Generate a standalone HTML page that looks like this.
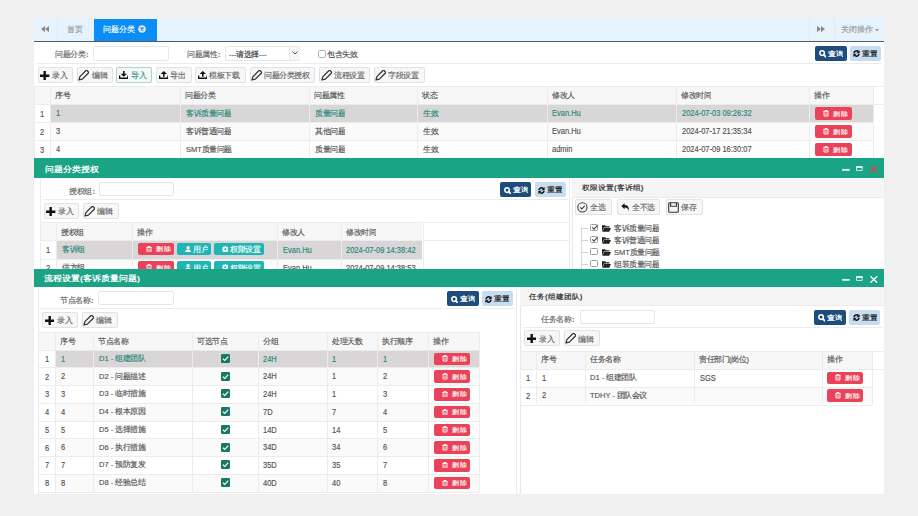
<!DOCTYPE html><html><head><meta charset="utf-8"><style>
*{box-sizing:border-box}
html,body{margin:0;padding:0}
body{width:918px;height:516px;background:#f0f0f0;position:relative;overflow:hidden;font-family:"Liberation Sans",sans-serif;font-size:7.6px;color:#555;line-height:1}
.a{position:absolute}
.t{position:absolute;white-space:nowrap;line-height:1;-webkit-text-stroke:0.3px currentColor}
.t.b{-webkit-text-stroke:0}
.btn{position:absolute;background:#f7f7f7;border:1px solid #e2e2e2;border-radius:2px;color:#666;white-space:nowrap}
.inp{position:absolute;background:#fff;border:1px solid #e6e6e6;border-radius:2px}
.hl{position:absolute;height:1px;background:#ececec}
.vl{position:absolute;width:1px;background:#ececec}
.del{position:absolute;background:#ea4359;border-radius:2px;color:#fff;white-space:nowrap}
.q{position:absolute;background:#1e4c7b;border-radius:2px;color:#fff}
.r{position:absolute;background:#c6ddf1;border-radius:2px;color:#1e3550}
.dh{position:absolute;background:#1ba386;color:#fff}
</style></head><body>
<div class="a" style="left:34px;top:18px;width:850px;height:476px;background:#fff"></div>
<div class="a" style="left:34px;top:18px;width:850px;height:23px;background:#e6f3fd"></div>
<div class="a" style="left:34px;top:41px;width:850px;height:1.3px;background:#4f5c68"></div>
<div class="a" style="left:93.8px;top:18.6px;width:63px;height:22px;background:#0a8df7"></div>
<div class="a" style="left:57px;top:18px;width:1px;height:23px;background:#dfeaf3"></div>
<div class="a" style="left:809px;top:18px;width:1px;height:23px;background:#dfeaf3"></div>
<div class="a" style="left:834px;top:18px;width:1px;height:23px;background:#dfeaf3"></div>
<div class="t" style="left:67px;top:25.099999999999998px;font-size:16px;transform:scale(.5,0.500);transform-origin:0 0;;color:#999">首页</div>
<div class="t" style="left:103px;top:25.099999999999998px;font-size:16px;transform:scale(.5,0.500);transform-origin:0 0;;color:#fff">问题分类</div>
<svg class="a" style="left:138px;top:25.2px" width="8" height="8" viewBox="0 0 8 8"><circle cx="4" cy="4" r="3.8" fill="#e0e6ea"/><path d="M2.5 2.5L5.5 5.5M5.5 2.5L2.5 5.5" stroke="#0a8df7" stroke-width="1.3"/></svg>
<svg class="a" style="left:40.8px;top:25.6px" width="8" height="6.2" viewBox="0 0 8 6.2"><path d="M0 3.1L4 0V6.2Z M4 3.1L8 0V6.2Z" fill="#8a8a8a"/></svg>
<svg class="a" style="left:817px;top:25.6px" width="8" height="6.2" viewBox="0 0 8 6.2"><path d="M8 3.1L4 0V6.2Z M4 3.1L0 0V6.2Z" fill="#8a8a8a"/></svg>
<div class="t" style="left:841px;top:25.099999999999998px;font-size:16px;transform:scale(.5,0.500);transform-origin:0 0;;color:#999">关闭操作</div>
<svg class="a" style="left:874.8px;top:29px" width="4" height="2.5" viewBox="0 0 4 2.5"><path d="M0 0H4L2 2.5Z" fill="#999"/></svg>
<div class="t" style="left:54.6px;top:50.2px;font-size:15px;transform:scale(.5,0.500);transform-origin:0 0;;color:#666">问题分类<span style="font-family:'Liberation Mono'">:</span></div>
<div class="inp" style="left:93.2px;top:45.5px;width:75.6px;height:15px;"></div>
<div class="t" style="left:187.2px;top:50.2px;font-size:15px;transform:scale(.5,0.500);transform-origin:0 0;;color:#666">问题属性<span style="font-family:'Liberation Mono'">:</span></div>
<div class="inp" style="left:225.3px;top:45.5px;width:75.2px;height:15px;"></div>
<div class="a" style="left:288.6px;top:46.5px;width:11px;height:13px;background:#f6f6f6;border-left:1px solid #e6e6e6"></div>
<div class="t" style="left:229px;top:50.2px;font-size:15px;transform:scale(.5,0.500);transform-origin:0 0;;color:#333">---请选择---</div>
<svg class="a" style="left:292px;top:50.5px" width="6" height="4" viewBox="0 0 6 4"><path d="M0.5 0.5L3 3L5.5 0.5" stroke="#555" stroke-width="1" fill="none"/></svg>
<div class="a" style="left:318.2px;top:49.7px;width:8.1px;height:8.1px;border:1px solid #b0b0b0;border-radius:1.5px;background:#fff"></div>
<div class="t" style="left:327.4px;top:49.6px;font-size:15px;transform:scale(.5,0.500);transform-origin:0 0;;color:#555">包含失效</div>
<div class="q" style="left:815px;top:45.5px;width:31.5px;height:15.5px;"></div>
<svg class="a" style="left:818.6px;top:50.35px" width="7.4" height="7.4" viewBox="0 0 7.4 7.4"><circle cx="3.1" cy="3.1" r="2.3" stroke="#fff" stroke-width="1.5" fill="none"/><path d="M4.7 4.7L6.8 6.8" stroke="#fff" stroke-width="1.8" stroke-linecap="round"/></svg>
<div class="t b" style="left:827.8px;top:50.050000000000004px;font-size:15px;transform:scale(.5,0.440);transform-origin:0 0;;color:#fff;font-weight:bold">查询</div>
<div class="r" style="left:849.9px;top:45.5px;width:31px;height:15.5px;"></div>
<svg class="a" style="left:853.3px;top:50.35px" width="7" height="7" viewBox="0 0 7 7"><path d="M1 3.2A2.6 2.6 0 0 1 5.5 1.7" stroke="#151515" stroke-width="1.5" fill="none"/><path d="M6.6 0V3.2H3.4Z" fill="#151515"/><path d="M6 3.8A2.6 2.6 0 0 1 1.5 5.3" stroke="#151515" stroke-width="1.5" fill="none"/><path d="M0.4 7V3.8H3.6Z" fill="#151515"/></svg>
<div class="t b" style="left:862.1px;top:50.050000000000004px;font-size:15px;transform:scale(.5,0.440);transform-origin:0 0;;color:#2a2a2a;font-weight:bold">重置</div>
<div class="hl" style="left:37px;top:63px;width:845px;height:1px;"></div>
<div class="btn" style="left:37.8px;top:67px;width:35.7px;height:15.7px;border-color:#e2e2e2"></div>
<svg class="a" style="left:40.4px;top:70.6px" width="9.4" height="9.4" viewBox="0 0 9.4 9.4"><path d="M4.7 0V9.4M0 4.7H9.4" stroke="#111" stroke-width="2.4"/></svg>
<div class="t" style="left:52.3px;top:71.14999999999999px;font-size:15px;transform:scale(.5,0.500);transform-origin:0 0;;color:#666">录入</div>
<div class="btn" style="left:77.2px;top:67px;width:36.1px;height:15.7px;border-color:#e2e2e2"></div>
<svg class="a" style="left:78.4px;top:69.6px" width="11" height="11" viewBox="0 0 11 11"><g transform="translate(1.0,10.0) rotate(-45)"><path d="M0 0L3 -1.75H11.3A1.1 1.1 0 0 1 12.4 -0.65V0.65A1.1 1.1 0 0 1 11.3 1.75H3Z" stroke="#333" stroke-width="1.25" fill="none" stroke-linejoin="round"/><path d="M0 0L1.6 -0.95V0.95Z" fill="#333"/></g></svg>
<div class="t" style="left:91.7px;top:71.14999999999999px;font-size:15px;transform:scale(.5,0.500);transform-origin:0 0;;color:#666">编辑</div>
<div class="btn" style="left:116px;top:67px;width:36.3px;height:15.7px;border-color:#a9d6cd"></div>
<svg class="a" style="left:118.8px;top:71.4px" width="9.6" height="8" viewBox="0 0 9.6 8"><path d="M4.0 0H5.6V2.8H8.0L4.8 5.8L1.6 2.8H4.0Z" fill="#111"/><path d="M0 4.4H1.3V6.5H8.3V4.4H9.6V8H0Z" fill="#111"/></svg>
<div class="t" style="left:130.5px;top:71.14999999999999px;font-size:15px;transform:scale(.5,0.500);transform-origin:0 0;;color:#2f9a8a">导入</div>
<div class="btn" style="left:155.7px;top:67px;width:35.9px;height:15.7px;border-color:#e2e2e2"></div>
<svg class="a" style="left:158.5px;top:71.4px" width="9.6" height="8" viewBox="0 0 9.6 8"><path d="M4.0 5.8H5.6V3.0H8.0L4.8 0L1.6 3.0H4.0Z" fill="#111"/><path d="M0 4.4H1.3V6.5H8.3V4.4H9.6V8H0Z" fill="#111"/></svg>
<div class="t" style="left:170.2px;top:71.14999999999999px;font-size:15px;transform:scale(.5,0.500);transform-origin:0 0;;color:#666">导出</div>
<div class="btn" style="left:194.8px;top:67px;width:51.2px;height:15.7px;border-color:#e2e2e2"></div>
<svg class="a" style="left:197.60000000000002px;top:71.4px" width="9.6" height="8" viewBox="0 0 9.6 8"><path d="M4.0 5.8H5.6V3.0H8.0L4.8 0L1.6 3.0H4.0Z" fill="#111"/><path d="M0 4.4H1.3V6.5H8.3V4.4H9.6V8H0Z" fill="#111"/></svg>
<div class="t" style="left:209.3px;top:71.14999999999999px;font-size:15px;transform:scale(.5,0.500);transform-origin:0 0;;color:#666">模板下载</div>
<div class="btn" style="left:249.7px;top:67px;width:65.8px;height:15.7px;border-color:#e2e2e2"></div>
<svg class="a" style="left:250.89999999999998px;top:69.6px" width="11" height="11" viewBox="0 0 11 11"><g transform="translate(1.0,10.0) rotate(-45)"><path d="M0 0L3 -1.75H11.3A1.1 1.1 0 0 1 12.4 -0.65V0.65A1.1 1.1 0 0 1 11.3 1.75H3Z" stroke="#333" stroke-width="1.25" fill="none" stroke-linejoin="round"/><path d="M0 0L1.6 -0.95V0.95Z" fill="#333"/></g></svg>
<div class="t" style="left:264.2px;top:71.14999999999999px;font-size:15px;transform:scale(.5,0.500);transform-origin:0 0;;color:#666">问题分类授权</div>
<div class="btn" style="left:319.4px;top:67px;width:50.8px;height:15.7px;border-color:#e2e2e2"></div>
<svg class="a" style="left:320.59999999999997px;top:69.6px" width="11" height="11" viewBox="0 0 11 11"><g transform="translate(1.0,10.0) rotate(-45)"><path d="M0 0L3 -1.75H11.3A1.1 1.1 0 0 1 12.4 -0.65V0.65A1.1 1.1 0 0 1 11.3 1.75H3Z" stroke="#333" stroke-width="1.25" fill="none" stroke-linejoin="round"/><path d="M0 0L1.6 -0.95V0.95Z" fill="#333"/></g></svg>
<div class="t" style="left:333.9px;top:71.14999999999999px;font-size:15px;transform:scale(.5,0.500);transform-origin:0 0;;color:#666">流程设置</div>
<div class="btn" style="left:373.5px;top:67px;width:51.2px;height:15.7px;border-color:#e2e2e2"></div>
<svg class="a" style="left:374.7px;top:69.6px" width="11" height="11" viewBox="0 0 11 11"><g transform="translate(1.0,10.0) rotate(-45)"><path d="M0 0L3 -1.75H11.3A1.1 1.1 0 0 1 12.4 -0.65V0.65A1.1 1.1 0 0 1 11.3 1.75H3Z" stroke="#333" stroke-width="1.25" fill="none" stroke-linejoin="round"/><path d="M0 0L1.6 -0.95V0.95Z" fill="#333"/></g></svg>
<div class="t" style="left:388.0px;top:71.14999999999999px;font-size:15px;transform:scale(.5,0.500);transform-origin:0 0;;color:#666">字段设置</div>
<div class="a" style="left:34px;top:86.3px;width:838.7px;height:17.8px;background:#f7f7f7"></div>
<div class="a" style="left:50.4px;top:104.1px;width:822.3000000000001px;height:18.0px;background:#d8d6d7"></div>
<div class="a" style="left:34px;top:104.1px;width:16.4px;height:18.0px;background:#fff"></div>
<div class="a" style="left:50.4px;top:122.1px;width:822.3000000000001px;height:18.0px;background:#fafafa"></div>
<div class="a" style="left:34px;top:122.1px;width:16.4px;height:18.0px;background:#fff"></div>
<div class="a" style="left:50.4px;top:140.1px;width:822.3000000000001px;height:18.0px;background:#fff"></div>
<div class="a" style="left:34px;top:140.1px;width:16.4px;height:18.0px;background:#fff"></div>
<div class="hl" style="left:34px;top:86.3px;width:838.7px;height:1px;"></div>
<div class="hl" style="left:34px;top:104.1px;width:838.7px;height:1px;"></div>
<div class="hl" style="left:34px;top:122.1px;width:838.7px;height:1px;"></div>
<div class="hl" style="left:34px;top:140.1px;width:838.7px;height:1px;"></div>
<div class="hl" style="left:34px;top:158.1px;width:838.7px;height:1px;"></div>
<div class="vl" style="left:34px;top:86.3px;width:1px;height:71.8px;"></div>
<div class="vl" style="left:50.4px;top:86.3px;width:1px;height:71.8px;"></div>
<div class="vl" style="left:180.3px;top:86.3px;width:1px;height:71.8px;"></div>
<div class="vl" style="left:309.4px;top:86.3px;width:1px;height:71.8px;"></div>
<div class="vl" style="left:417.3px;top:86.3px;width:1px;height:71.8px;"></div>
<div class="vl" style="left:546.6px;top:86.3px;width:1px;height:71.8px;"></div>
<div class="vl" style="left:676.4px;top:86.3px;width:1px;height:71.8px;"></div>
<div class="vl" style="left:809.3px;top:86.3px;width:1px;height:71.8px;"></div>
<div class="vl" style="left:872.7px;top:86.3px;width:1px;height:71.8px;"></div>
<div class="t" style="left:55.4px;top:91.4px;font-size:15px;transform:scale(.5,0.500);transform-origin:0 0;;color:#555">序号</div>
<div class="t" style="left:185.3px;top:91.4px;font-size:15px;transform:scale(.5,0.500);transform-origin:0 0;;color:#555">问题分类</div>
<div class="t" style="left:314.4px;top:91.4px;font-size:15px;transform:scale(.5,0.500);transform-origin:0 0;;color:#555">问题属性</div>
<div class="t" style="left:422.3px;top:91.4px;font-size:15px;transform:scale(.5,0.500);transform-origin:0 0;;color:#555">状态</div>
<div class="t" style="left:551.6px;top:91.4px;font-size:15px;transform:scale(.5,0.500);transform-origin:0 0;;color:#555">修改人</div>
<div class="t" style="left:681.4px;top:91.4px;font-size:15px;transform:scale(.5,0.500);transform-origin:0 0;;color:#555">修改时间</div>
<div class="t" style="left:814.3px;top:91.4px;font-size:15px;transform:scale(.5,0.500);transform-origin:0 0;;color:#555">操作</div>
<div class="t" style="left:40.2px;top:109.6px;font-size:15px;transform:scale(.5,0.550);transform-origin:0 0;;color:#555">1</div>
<div class="t" style="left:56.0px;top:109.4px;font-size:15px;transform:scale(.5,0.550);transform-origin:0 0;;color:#28897a">1</div>
<div class="t" style="left:185.9px;top:108.6px;font-size:15px;transform:scale(.5,0.500);transform-origin:0 0;;color:#28897a">客诉质量问题</div>
<div class="t" style="left:315.0px;top:108.6px;font-size:15px;transform:scale(.5,0.500);transform-origin:0 0;;color:#28897a">质量问题</div>
<div class="t" style="left:422.90000000000003px;top:108.6px;font-size:15px;transform:scale(.5,0.500);transform-origin:0 0;;color:#28897a">生效</div>
<div class="t" style="left:552.2px;top:109.4px;font-size:15px;transform:scale(.5,0.550);transform-origin:0 0;;color:#28897a">Evan.Hu</div>
<div class="t" style="left:682.0px;top:109.4px;font-size:15px;transform:scale(.5,0.550);transform-origin:0 0;;color:#28897a">2024-07-03 09:26:32</div>
<div class="t" style="left:40.2px;top:127.6px;font-size:15px;transform:scale(.5,0.550);transform-origin:0 0;;color:#555">2</div>
<div class="t" style="left:56.0px;top:127.4px;font-size:15px;transform:scale(.5,0.550);transform-origin:0 0;;color:#555">3</div>
<div class="t" style="left:185.9px;top:126.6px;font-size:15px;transform:scale(.5,0.500);transform-origin:0 0;;color:#555">客诉普通问题</div>
<div class="t" style="left:315.0px;top:126.6px;font-size:15px;transform:scale(.5,0.500);transform-origin:0 0;;color:#555">其他问题</div>
<div class="t" style="left:422.90000000000003px;top:126.6px;font-size:15px;transform:scale(.5,0.500);transform-origin:0 0;;color:#555">生效</div>
<div class="t" style="left:552.2px;top:127.4px;font-size:15px;transform:scale(.5,0.550);transform-origin:0 0;;color:#555">Evan.Hu</div>
<div class="t" style="left:682.0px;top:127.4px;font-size:15px;transform:scale(.5,0.550);transform-origin:0 0;;color:#555">2024-07-17 21:35:34</div>
<div class="t" style="left:40.2px;top:145.59999999999997px;font-size:15px;transform:scale(.5,0.550);transform-origin:0 0;;color:#555">3</div>
<div class="t" style="left:56.0px;top:145.39999999999998px;font-size:15px;transform:scale(.5,0.550);transform-origin:0 0;;color:#555">4</div>
<div class="t" style="left:185.9px;top:144.59999999999997px;font-size:15px;transform:scale(.5,0.500);transform-origin:0 0;;color:#555">SMT质量问题</div>
<div class="t" style="left:315.0px;top:144.59999999999997px;font-size:15px;transform:scale(.5,0.500);transform-origin:0 0;;color:#555">质量问题</div>
<div class="t" style="left:422.90000000000003px;top:144.59999999999997px;font-size:15px;transform:scale(.5,0.500);transform-origin:0 0;;color:#555">生效</div>
<div class="t" style="left:552.2px;top:145.39999999999998px;font-size:15px;transform:scale(.5,0.550);transform-origin:0 0;;color:#555">admin</div>
<div class="t" style="left:682.0px;top:145.39999999999998px;font-size:15px;transform:scale(.5,0.550);transform-origin:0 0;;color:#555">2024-07-09 16:30:07</div>
<div class="hl" style="left:872.7px;top:86.3px;width:11px;height:1px;"></div>
<div class="hl" style="left:872.7px;top:104px;width:11px;height:1px;"></div>
<div class="del" style="left:814.9px;top:107.1px;width:37px;height:12.8px;"></div>
<svg class="a" style="left:822.9px;top:110.2px" width="6" height="6.5" viewBox="0 0 6 6.5"><path d="M0.3 1.4H5.7M2 1.4V0.5H4V1.4M1 1.6V6H5V1.6" stroke="#fff" stroke-width="0.9" fill="none"/><path d="M2.3 2.6V5M3.7 2.6V5" stroke="#fff" stroke-width="0.6"/></svg>
<div class="t" style="left:832.8px;top:109.60000000000001px;font-size:15px;transform:scale(.5,0.425);transform-origin:0 0;;color:#fff">删除</div>
<div class="del" style="left:814.9px;top:125.1px;width:37px;height:12.8px;"></div>
<svg class="a" style="left:822.9px;top:128.2px" width="6" height="6.5" viewBox="0 0 6 6.5"><path d="M0.3 1.4H5.7M2 1.4V0.5H4V1.4M1 1.6V6H5V1.6" stroke="#fff" stroke-width="0.9" fill="none"/><path d="M2.3 2.6V5M3.7 2.6V5" stroke="#fff" stroke-width="0.6"/></svg>
<div class="t" style="left:832.8px;top:127.60000000000001px;font-size:15px;transform:scale(.5,0.425);transform-origin:0 0;;color:#fff">删除</div>
<div class="del" style="left:814.9px;top:143.1px;width:37px;height:12.8px;"></div>
<svg class="a" style="left:822.9px;top:146.2px" width="6" height="6.5" viewBox="0 0 6 6.5"><path d="M0.3 1.4H5.7M2 1.4V0.5H4V1.4M1 1.6V6H5V1.6" stroke="#fff" stroke-width="0.9" fill="none"/><path d="M2.3 2.6V5M3.7 2.6V5" stroke="#fff" stroke-width="0.6"/></svg>
<div class="t" style="left:832.8px;top:145.6px;font-size:15px;transform:scale(.5,0.425);transform-origin:0 0;;color:#fff">删除</div>
<div class="dh" style="left:34px;top:157.5px;width:850px;height:20.4px;"></div>
<div class="t b" style="left:45.4px;top:164.79999999999998px;font-size:18px;transform:scale(.5,0.450);transform-origin:0 0;;font-weight:bold;color:#fff">问题分类授权</div>
<svg class="a" style="left:840px;top:164px" width="40" height="10" viewBox="0 0 40 10"><rect x="2.1" y="4.9" width="7.6" height="1.9" fill="rgba(255,255,255,.85)"/><path d="M16.5 3H22.2V6.4H16.5Z" stroke="rgba(255,255,255,.85)" stroke-width="0.9" fill="none"/><rect x="16" y="2.2" width="6.7" height="1.7" fill="rgba(255,255,255,.85)"/><path d="M30.4 2.3L37.2 8.8M37.2 2.3L30.4 8.8" stroke="#d4463f" stroke-width="1.2"/></svg>
<div class="a" style="left:34px;top:177.9px;width:850px;height:316px;background:#fff"></div>
<div class="a" style="left:39.5px;top:177.9px;width:0.8px;height:92px;background:#ececec"></div>
<div class="a" style="left:569.2px;top:177.9px;width:1px;height:92px;background:#ececec"></div>
<div class="a" style="left:571.8px;top:177.9px;width:1px;height:92px;background:#e6e6e6"></div>
<div class="t" style="left:68.8px;top:187.2px;font-size:15px;transform:scale(.5,0.500);transform-origin:0 0;;color:#666">授权组<span style="font-family:'Liberation Mono'">:</span></div>
<div class="inp" style="left:99.3px;top:182.2px;width:75.1px;height:14.2px;"></div>
<div class="q" style="left:499.9px;top:182px;width:31.6px;height:15.2px;"></div>
<svg class="a" style="left:503.5px;top:186.7px" width="7.4" height="7.4" viewBox="0 0 7.4 7.4"><circle cx="3.1" cy="3.1" r="2.3" stroke="#fff" stroke-width="1.5" fill="none"/><path d="M4.7 4.7L6.8 6.8" stroke="#fff" stroke-width="1.8" stroke-linecap="round"/></svg>
<div class="t b" style="left:512.6999999999999px;top:186.39999999999998px;font-size:15px;transform:scale(.5,0.440);transform-origin:0 0;;color:#fff;font-weight:bold">查询</div>
<div class="r" style="left:534.5px;top:182px;width:31.2px;height:15.2px;"></div>
<svg class="a" style="left:537.9px;top:186.7px" width="7" height="7" viewBox="0 0 7 7"><path d="M1 3.2A2.6 2.6 0 0 1 5.5 1.7" stroke="#151515" stroke-width="1.5" fill="none"/><path d="M6.6 0V3.2H3.4Z" fill="#151515"/><path d="M6 3.8A2.6 2.6 0 0 1 1.5 5.3" stroke="#151515" stroke-width="1.5" fill="none"/><path d="M0.4 7V3.8H3.6Z" fill="#151515"/></svg>
<div class="t b" style="left:546.7px;top:186.39999999999998px;font-size:15px;transform:scale(.5,0.440);transform-origin:0 0;;color:#2a2a2a;font-weight:bold">重置</div>
<div class="hl" style="left:42.6px;top:199.1px;width:525px;height:1px;"></div>
<div class="btn" style="left:43.7px;top:203px;width:35.8px;height:15.6px;border-color:#e2e2e2"></div>
<svg class="a" style="left:46.300000000000004px;top:206.6px" width="9.4" height="9.4" viewBox="0 0 9.4 9.4"><path d="M4.7 0V9.4M0 4.7H9.4" stroke="#111" stroke-width="2.4"/></svg>
<div class="t" style="left:58.2px;top:207.1px;font-size:15px;transform:scale(.5,0.500);transform-origin:0 0;;color:#666">录入</div>
<div class="btn" style="left:82.5px;top:203px;width:36.4px;height:15.6px;border-color:#e2e2e2"></div>
<svg class="a" style="left:83.7px;top:205.6px" width="11" height="11" viewBox="0 0 11 11"><g transform="translate(1.0,10.0) rotate(-45)"><path d="M0 0L3 -1.75H11.3A1.1 1.1 0 0 1 12.4 -0.65V0.65A1.1 1.1 0 0 1 11.3 1.75H3Z" stroke="#333" stroke-width="1.25" fill="none" stroke-linejoin="round"/><path d="M0 0L1.6 -0.95V0.95Z" fill="#333"/></g></svg>
<div class="t" style="left:97.0px;top:207.1px;font-size:15px;transform:scale(.5,0.500);transform-origin:0 0;;color:#666">编辑</div>
<div class="a" style="left:40.3px;top:222.1px;width:382.2px;height:18.2px;background:#f7f7f7"></div>
<div class="a" style="left:56.1px;top:240.29999999999998px;width:366.4px;height:18.5px;background:#d8d6d7"></div>
<div class="a" style="left:40.3px;top:240.29999999999998px;width:15.800000000000004px;height:18.5px;background:#fff"></div>
<div class="a" style="left:56.1px;top:258.79999999999995px;width:366.4px;height:18.5px;background:#fafafa"></div>
<div class="a" style="left:40.3px;top:258.79999999999995px;width:15.800000000000004px;height:18.5px;background:#fff"></div>
<div class="hl" style="left:40.3px;top:222.1px;width:382.2px;height:1px;"></div>
<div class="hl" style="left:40.3px;top:240.29999999999998px;width:382.2px;height:1px;"></div>
<div class="hl" style="left:40.3px;top:258.79999999999995px;width:382.2px;height:1px;"></div>
<div class="hl" style="left:40.3px;top:277.29999999999995px;width:382.2px;height:1px;"></div>
<div class="vl" style="left:40.3px;top:222.1px;width:1px;height:55.2px;"></div>
<div class="vl" style="left:56.1px;top:222.1px;width:1px;height:55.2px;"></div>
<div class="vl" style="left:132.4px;top:222.1px;width:1px;height:55.2px;"></div>
<div class="vl" style="left:277.3px;top:222.1px;width:1px;height:55.2px;"></div>
<div class="vl" style="left:340.8px;top:222.1px;width:1px;height:55.2px;"></div>
<div class="vl" style="left:422.5px;top:222.1px;width:1px;height:55.2px;"></div>
<div class="t" style="left:61.1px;top:227.79999999999998px;font-size:15px;transform:scale(.5,0.500);transform-origin:0 0;;color:#555">授权组</div>
<div class="t" style="left:137.4px;top:227.79999999999998px;font-size:15px;transform:scale(.5,0.500);transform-origin:0 0;;color:#555">操作</div>
<div class="t" style="left:282.3px;top:227.79999999999998px;font-size:15px;transform:scale(.5,0.500);transform-origin:0 0;;color:#555">修改人</div>
<div class="t" style="left:345.8px;top:227.79999999999998px;font-size:15px;transform:scale(.5,0.500);transform-origin:0 0;;color:#555">修改时间</div>
<div class="t" style="left:46.2px;top:245.84999999999997px;font-size:15px;transform:scale(.5,0.550);transform-origin:0 0;;color:#555">1</div>
<div class="t" style="left:61.7px;top:244.84999999999997px;font-size:15px;transform:scale(.5,0.500);transform-origin:0 0;;color:#28897a">客诉组</div>
<div class="t" style="left:282.90000000000003px;top:245.64999999999998px;font-size:15px;transform:scale(.5,0.550);transform-origin:0 0;;color:#28897a">Evan.Hu</div>
<div class="t" style="left:346.40000000000003px;top:245.64999999999998px;font-size:15px;transform:scale(.5,0.550);transform-origin:0 0;;color:#28897a">2024-07-09 14:38:42</div>
<div class="t" style="left:46.2px;top:264.34999999999997px;font-size:15px;transform:scale(.5,0.550);transform-origin:0 0;;color:#555">2</div>
<div class="t" style="left:61.7px;top:263.34999999999997px;font-size:15px;transform:scale(.5,0.500);transform-origin:0 0;;color:#555">供方组</div>
<div class="t" style="left:282.90000000000003px;top:264.1499999999999px;font-size:15px;transform:scale(.5,0.550);transform-origin:0 0;;color:#555">Evan.Hu</div>
<div class="t" style="left:346.40000000000003px;top:264.1499999999999px;font-size:15px;transform:scale(.5,0.550);transform-origin:0 0;;color:#555">2024-07-09 14:38:53</div>
<div class="hl" style="left:422.5px;top:222.1px;width:147px;height:1px;"></div>
<div class="hl" style="left:422.5px;top:240.3px;width:147px;height:1px;"></div>
<div class="del" style="left:137.9px;top:242.9px;width:36.6px;height:12.4px;"></div>
<svg class="a" style="left:145.9px;top:245.79999999999998px" width="6" height="6.5" viewBox="0 0 6 6.5"><path d="M0.3 1.4H5.7M2 1.4V0.5H4V1.4M1 1.6V6H5V1.6" stroke="#fff" stroke-width="0.9" fill="none"/><path d="M2.3 2.6V5M3.7 2.6V5" stroke="#fff" stroke-width="0.6"/></svg>
<div class="t" style="left:155.8px;top:245.2px;font-size:15px;transform:scale(.5,0.425);transform-origin:0 0;;color:#fff">删除</div>
<div class="a" style="left:177.1px;top:242.9px;width:33.9px;height:12.5px;background:#1fb5b4;border-radius:2px"></div>
<svg class="a" style="left:184.6px;top:245.9px" width="6.2" height="6.5" viewBox="0 0 6 6.5"><circle cx="3" cy="1.7" r="1.7" fill="#fff"/><path d="M0 6.5Q0 3.6 3 3.6Q6 3.6 6 6.5Z" fill="#fff"/></svg>
<div class="t" style="left:192.6px;top:245.1px;font-size:15px;transform:scale(.5,0.500);transform-origin:0 0;;color:#fff">用户</div>
<div class="a" style="left:214.1px;top:242.9px;width:49.7px;height:12.5px;background:#1fb5b4;border-radius:2px"></div>
<svg class="a" style="left:221.9px;top:245.8px" width="6.6" height="6.6" viewBox="0 0 6.5 6.5"><circle cx="3.25" cy="3.25" r="2.5" fill="#fff"/><rect x="2.55" y="-0.1" width="1.4" height="6.7" fill="#fff" transform="rotate(0 3.25 3.25)"/><rect x="2.55" y="-0.1" width="1.4" height="6.7" fill="#fff" transform="rotate(45 3.25 3.25)"/><rect x="2.55" y="-0.1" width="1.4" height="6.7" fill="#fff" transform="rotate(90 3.25 3.25)"/><rect x="2.55" y="-0.1" width="1.4" height="6.7" fill="#fff" transform="rotate(135 3.25 3.25)"/><circle cx="3.25" cy="3.25" r="1.05" fill="#1fb5b4"/></svg>
<div class="t" style="left:230.1px;top:245.1px;font-size:15px;transform:scale(.5,0.500);transform-origin:0 0;;color:#fff">权限设置</div>
<div class="del" style="left:137.9px;top:261.4px;width:36.6px;height:12.4px;"></div>
<svg class="a" style="left:145.9px;top:264.29999999999995px" width="6" height="6.5" viewBox="0 0 6 6.5"><path d="M0.3 1.4H5.7M2 1.4V0.5H4V1.4M1 1.6V6H5V1.6" stroke="#fff" stroke-width="0.9" fill="none"/><path d="M2.3 2.6V5M3.7 2.6V5" stroke="#fff" stroke-width="0.6"/></svg>
<div class="t" style="left:155.8px;top:263.69999999999993px;font-size:15px;transform:scale(.5,0.425);transform-origin:0 0;;color:#fff">删除</div>
<div class="a" style="left:177.1px;top:261.4px;width:33.9px;height:12.5px;background:#1fb5b4;border-radius:2px"></div>
<svg class="a" style="left:184.6px;top:264.4px" width="6.2" height="6.5" viewBox="0 0 6 6.5"><circle cx="3" cy="1.7" r="1.7" fill="#fff"/><path d="M0 6.5Q0 3.6 3 3.6Q6 3.6 6 6.5Z" fill="#fff"/></svg>
<div class="t" style="left:192.6px;top:263.59999999999997px;font-size:15px;transform:scale(.5,0.500);transform-origin:0 0;;color:#fff">用户</div>
<div class="a" style="left:214.1px;top:261.4px;width:49.7px;height:12.5px;background:#1fb5b4;border-radius:2px"></div>
<svg class="a" style="left:221.9px;top:264.29999999999995px" width="6.6" height="6.6" viewBox="0 0 6.5 6.5"><circle cx="3.25" cy="3.25" r="2.5" fill="#fff"/><rect x="2.55" y="-0.1" width="1.4" height="6.7" fill="#fff" transform="rotate(0 3.25 3.25)"/><rect x="2.55" y="-0.1" width="1.4" height="6.7" fill="#fff" transform="rotate(45 3.25 3.25)"/><rect x="2.55" y="-0.1" width="1.4" height="6.7" fill="#fff" transform="rotate(90 3.25 3.25)"/><rect x="2.55" y="-0.1" width="1.4" height="6.7" fill="#fff" transform="rotate(135 3.25 3.25)"/><circle cx="3.25" cy="3.25" r="1.05" fill="#1fb5b4"/></svg>
<div class="t" style="left:230.1px;top:263.59999999999997px;font-size:15px;transform:scale(.5,0.500);transform-origin:0 0;;color:#fff">权限设置</div>
<div class="a" style="left:572.2px;top:178.5px;width:312px;height:19px;background:#f5f5f5"></div>
<div class="hl" style="left:572.2px;top:197.3px;width:312px;height:1px;"></div>
<div class="t b" style="left:581.8px;top:184.1px;font-size:16px;transform:scale(.5,0.450);transform-origin:0 0;;font-weight:bold;color:#444">权限设置(客诉组)</div>
<div class="btn" style="left:575.4px;top:199.4px;width:36.6px;height:15.4px;"></div>
<div class="t" style="left:590.4px;top:203.39999999999998px;font-size:15px;transform:scale(.5,0.500);transform-origin:0 0;;color:#666">全选</div>
<svg class="a" style="left:577.1px;top:202px" width="11" height="11" viewBox="0 0 11 11"><circle cx="5.4" cy="5.4" r="4.6" stroke="#3a3f4c" stroke-width="1.1" fill="none"/><path d="M3.1 5.3L4.8 7L7.8 3.9" stroke="#3a3f4c" stroke-width="1.1" fill="none"/></svg>
<div class="btn" style="left:617.3px;top:199.4px;width:43.2px;height:15.4px;"></div>
<div class="t" style="left:632px;top:203.39999999999998px;font-size:15px;transform:scale(.5,0.500);transform-origin:0 0;;color:#666">全不选</div>
<svg class="a" style="left:620.8px;top:203px" width="8.5" height="8.5" viewBox="0 0 9 9"><path d="M0.3 3.3L3.8 0.3V2.1Q8.8 2.1 8.4 8.6Q7.4 4.8 3.8 4.8V6.5Z" fill="#1a1a1a"/></svg>
<div class="btn" style="left:666.1px;top:199.4px;width:36.6px;height:15.4px;"></div>
<div class="t" style="left:680.8px;top:203.39999999999998px;font-size:15px;transform:scale(.5,0.500);transform-origin:0 0;;color:#666">保存</div>
<svg class="a" style="left:667.8px;top:201.8px" width="11" height="11" viewBox="0 0 11 11"><rect x="0.7" y="0.7" width="9.6" height="9.6" rx="1" stroke="#333" stroke-width="1.1" fill="none"/><path d="M2.6 0.7V4.2H8.4V0.7" stroke="#333" stroke-width="1.1" fill="none"/></svg>
<div class="a" style="left:581.4px;top:226.5px;width:0.9px;height:42px;background:#d6d6d6"></div>
<div class="a" style="left:581.4px;top:227.7px;width:7px;height:0.9px;background:#d6d6d6"></div>
<div class="a" style="left:590.3px;top:223.89999999999998px;width:7.5px;height:7.5px;border:0.9px solid #9c9c9c;border-radius:1.5px;background:#fff"></div>
<svg class="a" style="left:591px;top:224.2px" width="7" height="7" viewBox="0 0 7 7"><path d="M1.3 3.4L3 5.2L6.6 1.2" stroke="#444" stroke-width="1.1" fill="none"/></svg>
<svg class="a" style="left:602px;top:224.5px" width="9" height="7" viewBox="0 0 9 7"><path d="M0 0.3H3.2L4 1.2H7.5V2.6H2L0 6.5Z" fill="#222"/><path d="M2.2 3H9L7.2 6.8H0.2Z" fill="#222"/></svg>
<div class="t" style="left:613.6px;top:224.29999999999998px;font-size:15px;transform:scale(.5,0.500);transform-origin:0 0;;color:#555">客诉质量问题</div>
<div class="a" style="left:581.4px;top:239.7px;width:7px;height:0.9px;background:#d6d6d6"></div>
<div class="a" style="left:590.3px;top:235.89999999999998px;width:7.5px;height:7.5px;border:0.9px solid #9c9c9c;border-radius:1.5px;background:#fff"></div>
<svg class="a" style="left:591px;top:236.2px" width="7" height="7" viewBox="0 0 7 7"><path d="M1.3 3.4L3 5.2L6.6 1.2" stroke="#444" stroke-width="1.1" fill="none"/></svg>
<svg class="a" style="left:602px;top:236.5px" width="9" height="7" viewBox="0 0 9 7"><path d="M0 0.3H3.2L4 1.2H7.5V2.6H2L0 6.5Z" fill="#222"/><path d="M2.2 3H9L7.2 6.8H0.2Z" fill="#222"/></svg>
<div class="t" style="left:613.6px;top:236.29999999999998px;font-size:15px;transform:scale(.5,0.500);transform-origin:0 0;;color:#555">客诉普通问题</div>
<div class="a" style="left:581.4px;top:251.7px;width:7px;height:0.9px;background:#d6d6d6"></div>
<div class="a" style="left:590.3px;top:247.89999999999998px;width:7.5px;height:7.5px;border:0.9px solid #9c9c9c;border-radius:1.5px;background:#fff"></div>
<svg class="a" style="left:602px;top:248.5px" width="9" height="7" viewBox="0 0 9 7"><path d="M0 0.3H3.2L4 1.2H7.5V2.6H2L0 6.5Z" fill="#222"/><path d="M2.2 3H9L7.2 6.8H0.2Z" fill="#222"/></svg>
<div class="t" style="left:613.6px;top:248.29999999999998px;font-size:15px;transform:scale(.5,0.500);transform-origin:0 0;;color:#555">SMT质量问题</div>
<div class="a" style="left:581.4px;top:263.7px;width:7px;height:0.9px;background:#d6d6d6"></div>
<div class="a" style="left:590.3px;top:259.9px;width:7.5px;height:7.5px;border:0.9px solid #9c9c9c;border-radius:1.5px;background:#fff"></div>
<svg class="a" style="left:602px;top:260.5px" width="9" height="7" viewBox="0 0 9 7"><path d="M0 0.3H3.2L4 1.2H7.5V2.6H2L0 6.5Z" fill="#222"/><path d="M2.2 3H9L7.2 6.8H0.2Z" fill="#222"/></svg>
<div class="t" style="left:613.6px;top:260.29999999999995px;font-size:15px;transform:scale(.5,0.500);transform-origin:0 0;;color:#555">组装质量问题</div>
<div class="dh" style="left:34px;top:269px;width:850px;height:18px;"></div>
<div class="t b" style="left:43.5px;top:273.8px;font-size:18px;transform:scale(.5,0.450);transform-origin:0 0;;font-weight:bold;color:#fff">流程设置(客诉质量问题)</div>
<svg class="a" style="left:840px;top:273.5px" width="40" height="10" viewBox="0 0 40 10"><rect x="2.1" y="4.9" width="7.6" height="1.9" fill="rgba(255,255,255,.85)"/><path d="M16.5 3H22.2V6.4H16.5Z" stroke="rgba(255,255,255,.85)" stroke-width="0.9" fill="none"/><rect x="16" y="2.2" width="6.7" height="1.7" fill="rgba(255,255,255,.85)"/><path d="M30.4 2.3L37.2 8.8M37.2 2.3L30.4 8.8" stroke="#fff" stroke-width="1.2"/></svg>
<div class="a" style="left:34px;top:287px;width:850px;height:207px;background:#fff"></div>
<div class="a" style="left:516.2px;top:287px;width:1px;height:207px;background:#ececec"></div>
<div class="a" style="left:519.6px;top:287px;width:1px;height:207px;background:#e6e6e6"></div>
<div class="a" style="left:38.3px;top:287px;width:0.8px;height:207px;background:#ececec"></div>
<div class="t" style="left:59.8px;top:296.2px;font-size:15px;transform:scale(.5,0.500);transform-origin:0 0;;color:#666">节点名称<span style="font-family:'Liberation Mono'">:</span></div>
<div class="inp" style="left:98.2px;top:291px;width:75.6px;height:14.3px;"></div>
<div class="q" style="left:447.2px;top:291px;width:31.6px;height:15.3px;"></div>
<svg class="a" style="left:450.8px;top:295.75px" width="7.4" height="7.4" viewBox="0 0 7.4 7.4"><circle cx="3.1" cy="3.1" r="2.3" stroke="#fff" stroke-width="1.5" fill="none"/><path d="M4.7 4.7L6.8 6.8" stroke="#fff" stroke-width="1.8" stroke-linecap="round"/></svg>
<div class="t b" style="left:460.0px;top:295.45px;font-size:15px;transform:scale(.5,0.440);transform-origin:0 0;;color:#fff;font-weight:bold">查询</div>
<div class="r" style="left:482px;top:291px;width:31.2px;height:15.2px;"></div>
<svg class="a" style="left:485.4px;top:295.70000000000005px" width="7" height="7" viewBox="0 0 7 7"><path d="M1 3.2A2.6 2.6 0 0 1 5.5 1.7" stroke="#151515" stroke-width="1.5" fill="none"/><path d="M6.6 0V3.2H3.4Z" fill="#151515"/><path d="M6 3.8A2.6 2.6 0 0 1 1.5 5.3" stroke="#151515" stroke-width="1.5" fill="none"/><path d="M0.4 7V3.8H3.6Z" fill="#151515"/></svg>
<div class="t b" style="left:494.2px;top:295.40000000000003px;font-size:15px;transform:scale(.5,0.440);transform-origin:0 0;;color:#2a2a2a;font-weight:bold">重置</div>
<div class="hl" style="left:41px;top:308.4px;width:474px;height:1px;"></div>
<div class="btn" style="left:42.4px;top:312.3px;width:36px;height:15.4px;border-color:#e2e2e2"></div>
<svg class="a" style="left:45.0px;top:315.90000000000003px" width="9.4" height="9.4" viewBox="0 0 9.4 9.4"><path d="M4.7 0V9.4M0 4.7H9.4" stroke="#111" stroke-width="2.4"/></svg>
<div class="t" style="left:56.9px;top:316.3px;font-size:15px;transform:scale(.5,0.500);transform-origin:0 0;;color:#666">录入</div>
<div class="btn" style="left:81.6px;top:312.3px;width:36.6px;height:15.4px;border-color:#e2e2e2"></div>
<svg class="a" style="left:82.8px;top:314.90000000000003px" width="11" height="11" viewBox="0 0 11 11"><g transform="translate(1.0,10.0) rotate(-45)"><path d="M0 0L3 -1.75H11.3A1.1 1.1 0 0 1 12.4 -0.65V0.65A1.1 1.1 0 0 1 11.3 1.75H3Z" stroke="#333" stroke-width="1.25" fill="none" stroke-linejoin="round"/><path d="M0 0L1.6 -0.95V0.95Z" fill="#333"/></g></svg>
<div class="t" style="left:96.1px;top:316.3px;font-size:15px;transform:scale(.5,0.500);transform-origin:0 0;;color:#666">编辑</div>
<div class="a" style="left:38.3px;top:332.2px;width:441.0px;height:17.4px;background:#f7f7f7"></div>
<div class="a" style="left:55px;top:349.59999999999997px;width:424.3px;height:17.75px;background:#d8d6d7"></div>
<div class="a" style="left:38.3px;top:349.59999999999997px;width:16.700000000000003px;height:17.75px;background:#fff"></div>
<div class="a" style="left:55px;top:367.34999999999997px;width:424.3px;height:17.75px;background:#fafafa"></div>
<div class="a" style="left:38.3px;top:367.34999999999997px;width:16.700000000000003px;height:17.75px;background:#fff"></div>
<div class="a" style="left:55px;top:385.09999999999997px;width:424.3px;height:17.75px;background:#fff"></div>
<div class="a" style="left:38.3px;top:385.09999999999997px;width:16.700000000000003px;height:17.75px;background:#fff"></div>
<div class="a" style="left:55px;top:402.84999999999997px;width:424.3px;height:17.75px;background:#fafafa"></div>
<div class="a" style="left:38.3px;top:402.84999999999997px;width:16.700000000000003px;height:17.75px;background:#fff"></div>
<div class="a" style="left:55px;top:420.59999999999997px;width:424.3px;height:17.75px;background:#fff"></div>
<div class="a" style="left:38.3px;top:420.59999999999997px;width:16.700000000000003px;height:17.75px;background:#fff"></div>
<div class="a" style="left:55px;top:438.34999999999997px;width:424.3px;height:17.75px;background:#fafafa"></div>
<div class="a" style="left:38.3px;top:438.34999999999997px;width:16.700000000000003px;height:17.75px;background:#fff"></div>
<div class="a" style="left:55px;top:456.09999999999997px;width:424.3px;height:17.75px;background:#fff"></div>
<div class="a" style="left:38.3px;top:456.09999999999997px;width:16.700000000000003px;height:17.75px;background:#fff"></div>
<div class="a" style="left:55px;top:473.84999999999997px;width:424.3px;height:17.75px;background:#fafafa"></div>
<div class="a" style="left:38.3px;top:473.84999999999997px;width:16.700000000000003px;height:17.75px;background:#fff"></div>
<div class="hl" style="left:38.3px;top:332.2px;width:441.0px;height:1px;"></div>
<div class="hl" style="left:38.3px;top:349.59999999999997px;width:441.0px;height:1px;"></div>
<div class="hl" style="left:38.3px;top:367.34999999999997px;width:441.0px;height:1px;"></div>
<div class="hl" style="left:38.3px;top:385.09999999999997px;width:441.0px;height:1px;"></div>
<div class="hl" style="left:38.3px;top:402.84999999999997px;width:441.0px;height:1px;"></div>
<div class="hl" style="left:38.3px;top:420.59999999999997px;width:441.0px;height:1px;"></div>
<div class="hl" style="left:38.3px;top:438.34999999999997px;width:441.0px;height:1px;"></div>
<div class="hl" style="left:38.3px;top:456.09999999999997px;width:441.0px;height:1px;"></div>
<div class="hl" style="left:38.3px;top:473.84999999999997px;width:441.0px;height:1px;"></div>
<div class="hl" style="left:38.3px;top:491.59999999999997px;width:441.0px;height:1px;"></div>
<div class="vl" style="left:38.3px;top:332.2px;width:1px;height:159.4px;"></div>
<div class="vl" style="left:55px;top:332.2px;width:1px;height:159.4px;"></div>
<div class="vl" style="left:93px;top:332.2px;width:1px;height:159.4px;"></div>
<div class="vl" style="left:192.2px;top:332.2px;width:1px;height:159.4px;"></div>
<div class="vl" style="left:257.6px;top:332.2px;width:1px;height:159.4px;"></div>
<div class="vl" style="left:326.8px;top:332.2px;width:1px;height:159.4px;"></div>
<div class="vl" style="left:377px;top:332.2px;width:1px;height:159.4px;"></div>
<div class="vl" style="left:428.3px;top:332.2px;width:1px;height:159.4px;"></div>
<div class="vl" style="left:479.3px;top:332.2px;width:1px;height:159.4px;"></div>
<div class="t" style="left:60px;top:337.29999999999995px;font-size:15px;transform:scale(.5,0.500);transform-origin:0 0;;color:#555">序号</div>
<div class="t" style="left:98px;top:337.29999999999995px;font-size:15px;transform:scale(.5,0.500);transform-origin:0 0;;color:#555">节点名称</div>
<div class="t" style="left:197.2px;top:337.29999999999995px;font-size:15px;transform:scale(.5,0.500);transform-origin:0 0;;color:#555">可选节点</div>
<div class="t" style="left:262.6px;top:337.29999999999995px;font-size:15px;transform:scale(.5,0.500);transform-origin:0 0;;color:#555">分组</div>
<div class="t" style="left:331.8px;top:337.29999999999995px;font-size:15px;transform:scale(.5,0.500);transform-origin:0 0;;color:#555">处理天数</div>
<div class="t" style="left:382px;top:337.29999999999995px;font-size:15px;transform:scale(.5,0.500);transform-origin:0 0;;color:#555">执行顺序</div>
<div class="t" style="left:433.3px;top:337.29999999999995px;font-size:15px;transform:scale(.5,0.500);transform-origin:0 0;;color:#555">操作</div>
<div class="t" style="left:44.65px;top:354.775px;font-size:15px;transform:scale(.5,0.550);transform-origin:0 0;;color:#555">1</div>
<div class="t" style="left:60.6px;top:354.57499999999993px;font-size:15px;transform:scale(.5,0.550);transform-origin:0 0;;color:#28897a">1</div>
<div class="t" style="left:98.6px;top:353.775px;font-size:15px;transform:scale(.5,0.500);transform-origin:0 0;;color:#28897a">D1 - 组建团队</div>
<div class="t" style="left:263.20000000000005px;top:354.57499999999993px;font-size:15px;transform:scale(.5,0.550);transform-origin:0 0;;color:#28897a">24H</div>
<div class="t" style="left:332.40000000000003px;top:354.57499999999993px;font-size:15px;transform:scale(.5,0.550);transform-origin:0 0;;color:#28897a">1</div>
<div class="t" style="left:382.6px;top:354.57499999999993px;font-size:15px;transform:scale(.5,0.550);transform-origin:0 0;;color:#28897a">1</div>
<div class="t" style="left:44.65px;top:372.525px;font-size:15px;transform:scale(.5,0.550);transform-origin:0 0;;color:#555">2</div>
<div class="t" style="left:60.6px;top:372.32499999999993px;font-size:15px;transform:scale(.5,0.550);transform-origin:0 0;;color:#555">2</div>
<div class="t" style="left:98.6px;top:371.525px;font-size:15px;transform:scale(.5,0.500);transform-origin:0 0;;color:#555">D2 - 问题描述</div>
<div class="t" style="left:263.20000000000005px;top:372.32499999999993px;font-size:15px;transform:scale(.5,0.550);transform-origin:0 0;;color:#555">24H</div>
<div class="t" style="left:332.40000000000003px;top:372.32499999999993px;font-size:15px;transform:scale(.5,0.550);transform-origin:0 0;;color:#555">1</div>
<div class="t" style="left:382.6px;top:372.32499999999993px;font-size:15px;transform:scale(.5,0.550);transform-origin:0 0;;color:#555">2</div>
<div class="t" style="left:44.65px;top:390.275px;font-size:15px;transform:scale(.5,0.550);transform-origin:0 0;;color:#555">3</div>
<div class="t" style="left:60.6px;top:390.07499999999993px;font-size:15px;transform:scale(.5,0.550);transform-origin:0 0;;color:#555">3</div>
<div class="t" style="left:98.6px;top:389.275px;font-size:15px;transform:scale(.5,0.500);transform-origin:0 0;;color:#555">D3 - 临时措施</div>
<div class="t" style="left:263.20000000000005px;top:390.07499999999993px;font-size:15px;transform:scale(.5,0.550);transform-origin:0 0;;color:#555">24H</div>
<div class="t" style="left:332.40000000000003px;top:390.07499999999993px;font-size:15px;transform:scale(.5,0.550);transform-origin:0 0;;color:#555">1</div>
<div class="t" style="left:382.6px;top:390.07499999999993px;font-size:15px;transform:scale(.5,0.550);transform-origin:0 0;;color:#555">3</div>
<div class="t" style="left:44.65px;top:408.025px;font-size:15px;transform:scale(.5,0.550);transform-origin:0 0;;color:#555">4</div>
<div class="t" style="left:60.6px;top:407.82499999999993px;font-size:15px;transform:scale(.5,0.550);transform-origin:0 0;;color:#555">4</div>
<div class="t" style="left:98.6px;top:407.025px;font-size:15px;transform:scale(.5,0.500);transform-origin:0 0;;color:#555">D4 - 根本原因</div>
<div class="t" style="left:263.20000000000005px;top:407.82499999999993px;font-size:15px;transform:scale(.5,0.550);transform-origin:0 0;;color:#555">7D</div>
<div class="t" style="left:332.40000000000003px;top:407.82499999999993px;font-size:15px;transform:scale(.5,0.550);transform-origin:0 0;;color:#555">7</div>
<div class="t" style="left:382.6px;top:407.82499999999993px;font-size:15px;transform:scale(.5,0.550);transform-origin:0 0;;color:#555">4</div>
<div class="t" style="left:44.65px;top:425.775px;font-size:15px;transform:scale(.5,0.550);transform-origin:0 0;;color:#555">5</div>
<div class="t" style="left:60.6px;top:425.57499999999993px;font-size:15px;transform:scale(.5,0.550);transform-origin:0 0;;color:#555">5</div>
<div class="t" style="left:98.6px;top:424.775px;font-size:15px;transform:scale(.5,0.500);transform-origin:0 0;;color:#555">D5 - 选择措施</div>
<div class="t" style="left:263.20000000000005px;top:425.57499999999993px;font-size:15px;transform:scale(.5,0.550);transform-origin:0 0;;color:#555">14D</div>
<div class="t" style="left:332.40000000000003px;top:425.57499999999993px;font-size:15px;transform:scale(.5,0.550);transform-origin:0 0;;color:#555">14</div>
<div class="t" style="left:382.6px;top:425.57499999999993px;font-size:15px;transform:scale(.5,0.550);transform-origin:0 0;;color:#555">5</div>
<div class="t" style="left:44.65px;top:443.525px;font-size:15px;transform:scale(.5,0.550);transform-origin:0 0;;color:#555">6</div>
<div class="t" style="left:60.6px;top:443.32499999999993px;font-size:15px;transform:scale(.5,0.550);transform-origin:0 0;;color:#555">6</div>
<div class="t" style="left:98.6px;top:442.525px;font-size:15px;transform:scale(.5,0.500);transform-origin:0 0;;color:#555">D6 - 执行措施</div>
<div class="t" style="left:263.20000000000005px;top:443.32499999999993px;font-size:15px;transform:scale(.5,0.550);transform-origin:0 0;;color:#555">34D</div>
<div class="t" style="left:332.40000000000003px;top:443.32499999999993px;font-size:15px;transform:scale(.5,0.550);transform-origin:0 0;;color:#555">34</div>
<div class="t" style="left:382.6px;top:443.32499999999993px;font-size:15px;transform:scale(.5,0.550);transform-origin:0 0;;color:#555">6</div>
<div class="t" style="left:44.65px;top:461.275px;font-size:15px;transform:scale(.5,0.550);transform-origin:0 0;;color:#555">7</div>
<div class="t" style="left:60.6px;top:461.07499999999993px;font-size:15px;transform:scale(.5,0.550);transform-origin:0 0;;color:#555">7</div>
<div class="t" style="left:98.6px;top:460.275px;font-size:15px;transform:scale(.5,0.500);transform-origin:0 0;;color:#555">D7 - 预防复发</div>
<div class="t" style="left:263.20000000000005px;top:461.07499999999993px;font-size:15px;transform:scale(.5,0.550);transform-origin:0 0;;color:#555">35D</div>
<div class="t" style="left:332.40000000000003px;top:461.07499999999993px;font-size:15px;transform:scale(.5,0.550);transform-origin:0 0;;color:#555">35</div>
<div class="t" style="left:382.6px;top:461.07499999999993px;font-size:15px;transform:scale(.5,0.550);transform-origin:0 0;;color:#555">7</div>
<div class="t" style="left:44.65px;top:479.025px;font-size:15px;transform:scale(.5,0.550);transform-origin:0 0;;color:#555">8</div>
<div class="t" style="left:60.6px;top:478.82499999999993px;font-size:15px;transform:scale(.5,0.550);transform-origin:0 0;;color:#555">8</div>
<div class="t" style="left:98.6px;top:478.025px;font-size:15px;transform:scale(.5,0.500);transform-origin:0 0;;color:#555">D8 - 经验总结</div>
<div class="t" style="left:263.20000000000005px;top:478.82499999999993px;font-size:15px;transform:scale(.5,0.550);transform-origin:0 0;;color:#555">40D</div>
<div class="t" style="left:332.40000000000003px;top:478.82499999999993px;font-size:15px;transform:scale(.5,0.550);transform-origin:0 0;;color:#555">40</div>
<div class="t" style="left:382.6px;top:478.82499999999993px;font-size:15px;transform:scale(.5,0.550);transform-origin:0 0;;color:#555">8</div>
<svg class="a" style="left:221.4px;top:353.90000000000003px" width="9" height="9" viewBox="0 0 9 9"><rect x="0" y="0" width="9" height="9" rx="1.2" fill="#187866"/><path d="M1.8 4.6L3.7 6.4L7.3 2.6" stroke="#fff" stroke-width="1.1" fill="none"/></svg>
<div class="del" style="left:433.8px;top:352.5px;width:36.5px;height:12.5px;"></div>
<svg class="a" style="left:441.8px;top:355.45px" width="6" height="6.5" viewBox="0 0 6 6.5"><path d="M0.3 1.4H5.7M2 1.4V0.5H4V1.4M1 1.6V6H5V1.6" stroke="#fff" stroke-width="0.9" fill="none"/><path d="M2.3 2.6V5M3.7 2.6V5" stroke="#fff" stroke-width="0.6"/></svg>
<div class="t" style="left:451.7px;top:354.84999999999997px;font-size:15px;transform:scale(.5,0.425);transform-origin:0 0;;color:#fff">删除</div>
<svg class="a" style="left:221.4px;top:371.65000000000003px" width="9" height="9" viewBox="0 0 9 9"><rect x="0" y="0" width="9" height="9" rx="1.2" fill="#187866"/><path d="M1.8 4.6L3.7 6.4L7.3 2.6" stroke="#fff" stroke-width="1.1" fill="none"/></svg>
<div class="del" style="left:433.8px;top:370.25px;width:36.5px;height:12.5px;"></div>
<svg class="a" style="left:441.8px;top:373.2px" width="6" height="6.5" viewBox="0 0 6 6.5"><path d="M0.3 1.4H5.7M2 1.4V0.5H4V1.4M1 1.6V6H5V1.6" stroke="#fff" stroke-width="0.9" fill="none"/><path d="M2.3 2.6V5M3.7 2.6V5" stroke="#fff" stroke-width="0.6"/></svg>
<div class="t" style="left:451.7px;top:372.59999999999997px;font-size:15px;transform:scale(.5,0.425);transform-origin:0 0;;color:#fff">删除</div>
<svg class="a" style="left:221.4px;top:389.40000000000003px" width="9" height="9" viewBox="0 0 9 9"><rect x="0" y="0" width="9" height="9" rx="1.2" fill="#187866"/><path d="M1.8 4.6L3.7 6.4L7.3 2.6" stroke="#fff" stroke-width="1.1" fill="none"/></svg>
<div class="del" style="left:433.8px;top:388.0px;width:36.5px;height:12.5px;"></div>
<svg class="a" style="left:441.8px;top:390.95px" width="6" height="6.5" viewBox="0 0 6 6.5"><path d="M0.3 1.4H5.7M2 1.4V0.5H4V1.4M1 1.6V6H5V1.6" stroke="#fff" stroke-width="0.9" fill="none"/><path d="M2.3 2.6V5M3.7 2.6V5" stroke="#fff" stroke-width="0.6"/></svg>
<div class="t" style="left:451.7px;top:390.34999999999997px;font-size:15px;transform:scale(.5,0.425);transform-origin:0 0;;color:#fff">删除</div>
<svg class="a" style="left:221.4px;top:407.15000000000003px" width="9" height="9" viewBox="0 0 9 9"><rect x="0" y="0" width="9" height="9" rx="1.2" fill="#187866"/><path d="M1.8 4.6L3.7 6.4L7.3 2.6" stroke="#fff" stroke-width="1.1" fill="none"/></svg>
<div class="del" style="left:433.8px;top:405.75px;width:36.5px;height:12.5px;"></div>
<svg class="a" style="left:441.8px;top:408.7px" width="6" height="6.5" viewBox="0 0 6 6.5"><path d="M0.3 1.4H5.7M2 1.4V0.5H4V1.4M1 1.6V6H5V1.6" stroke="#fff" stroke-width="0.9" fill="none"/><path d="M2.3 2.6V5M3.7 2.6V5" stroke="#fff" stroke-width="0.6"/></svg>
<div class="t" style="left:451.7px;top:408.09999999999997px;font-size:15px;transform:scale(.5,0.425);transform-origin:0 0;;color:#fff">删除</div>
<svg class="a" style="left:221.4px;top:424.90000000000003px" width="9" height="9" viewBox="0 0 9 9"><rect x="0" y="0" width="9" height="9" rx="1.2" fill="#187866"/><path d="M1.8 4.6L3.7 6.4L7.3 2.6" stroke="#fff" stroke-width="1.1" fill="none"/></svg>
<div class="del" style="left:433.8px;top:423.5px;width:36.5px;height:12.5px;"></div>
<svg class="a" style="left:441.8px;top:426.45px" width="6" height="6.5" viewBox="0 0 6 6.5"><path d="M0.3 1.4H5.7M2 1.4V0.5H4V1.4M1 1.6V6H5V1.6" stroke="#fff" stroke-width="0.9" fill="none"/><path d="M2.3 2.6V5M3.7 2.6V5" stroke="#fff" stroke-width="0.6"/></svg>
<div class="t" style="left:451.7px;top:425.84999999999997px;font-size:15px;transform:scale(.5,0.425);transform-origin:0 0;;color:#fff">删除</div>
<svg class="a" style="left:221.4px;top:442.65000000000003px" width="9" height="9" viewBox="0 0 9 9"><rect x="0" y="0" width="9" height="9" rx="1.2" fill="#187866"/><path d="M1.8 4.6L3.7 6.4L7.3 2.6" stroke="#fff" stroke-width="1.1" fill="none"/></svg>
<div class="del" style="left:433.8px;top:441.25px;width:36.5px;height:12.5px;"></div>
<svg class="a" style="left:441.8px;top:444.2px" width="6" height="6.5" viewBox="0 0 6 6.5"><path d="M0.3 1.4H5.7M2 1.4V0.5H4V1.4M1 1.6V6H5V1.6" stroke="#fff" stroke-width="0.9" fill="none"/><path d="M2.3 2.6V5M3.7 2.6V5" stroke="#fff" stroke-width="0.6"/></svg>
<div class="t" style="left:451.7px;top:443.59999999999997px;font-size:15px;transform:scale(.5,0.425);transform-origin:0 0;;color:#fff">删除</div>
<svg class="a" style="left:221.4px;top:460.40000000000003px" width="9" height="9" viewBox="0 0 9 9"><rect x="0" y="0" width="9" height="9" rx="1.2" fill="#187866"/><path d="M1.8 4.6L3.7 6.4L7.3 2.6" stroke="#fff" stroke-width="1.1" fill="none"/></svg>
<div class="del" style="left:433.8px;top:459.0px;width:36.5px;height:12.5px;"></div>
<svg class="a" style="left:441.8px;top:461.95px" width="6" height="6.5" viewBox="0 0 6 6.5"><path d="M0.3 1.4H5.7M2 1.4V0.5H4V1.4M1 1.6V6H5V1.6" stroke="#fff" stroke-width="0.9" fill="none"/><path d="M2.3 2.6V5M3.7 2.6V5" stroke="#fff" stroke-width="0.6"/></svg>
<div class="t" style="left:451.7px;top:461.34999999999997px;font-size:15px;transform:scale(.5,0.425);transform-origin:0 0;;color:#fff">删除</div>
<svg class="a" style="left:221.4px;top:478.15000000000003px" width="9" height="9" viewBox="0 0 9 9"><rect x="0" y="0" width="9" height="9" rx="1.2" fill="#187866"/><path d="M1.8 4.6L3.7 6.4L7.3 2.6" stroke="#fff" stroke-width="1.1" fill="none"/></svg>
<div class="del" style="left:433.8px;top:476.75px;width:36.5px;height:12.5px;"></div>
<svg class="a" style="left:441.8px;top:479.7px" width="6" height="6.5" viewBox="0 0 6 6.5"><path d="M0.3 1.4H5.7M2 1.4V0.5H4V1.4M1 1.6V6H5V1.6" stroke="#fff" stroke-width="0.9" fill="none"/><path d="M2.3 2.6V5M3.7 2.6V5" stroke="#fff" stroke-width="0.6"/></svg>
<div class="t" style="left:451.7px;top:479.09999999999997px;font-size:15px;transform:scale(.5,0.425);transform-origin:0 0;;color:#fff">删除</div>
<div class="a" style="left:520.3px;top:287px;width:364px;height:18.3px;background:#f5f5f5"></div>
<div class="hl" style="left:520.3px;top:305.3px;width:364px;height:1px;"></div>
<div class="t b" style="left:529.4px;top:292.59999999999997px;font-size:16px;transform:scale(.5,0.450);transform-origin:0 0;;font-weight:bold;color:#444">任务(组建团队)</div>
<div class="t" style="left:541.4px;top:314.7px;font-size:15px;transform:scale(.5,0.500);transform-origin:0 0;;color:#666">任务名称<span style="font-family:'Liberation Mono'">:</span></div>
<div class="inp" style="left:579.5px;top:309.7px;width:75.6px;height:14.6px;"></div>
<div class="q" style="left:814.3px;top:309.5px;width:31.3px;height:15.1px;"></div>
<svg class="a" style="left:817.9px;top:314.15000000000003px" width="7.4" height="7.4" viewBox="0 0 7.4 7.4"><circle cx="3.1" cy="3.1" r="2.3" stroke="#fff" stroke-width="1.5" fill="none"/><path d="M4.7 4.7L6.8 6.8" stroke="#fff" stroke-width="1.8" stroke-linecap="round"/></svg>
<div class="t b" style="left:827.0999999999999px;top:313.85px;font-size:15px;transform:scale(.5,0.440);transform-origin:0 0;;color:#fff;font-weight:bold">查询</div>
<div class="r" style="left:849.4px;top:309.5px;width:30.6px;height:15.1px;"></div>
<svg class="a" style="left:852.8px;top:314.15000000000003px" width="7" height="7" viewBox="0 0 7 7"><path d="M1 3.2A2.6 2.6 0 0 1 5.5 1.7" stroke="#151515" stroke-width="1.5" fill="none"/><path d="M6.6 0V3.2H3.4Z" fill="#151515"/><path d="M6 3.8A2.6 2.6 0 0 1 1.5 5.3" stroke="#151515" stroke-width="1.5" fill="none"/><path d="M0.4 7V3.8H3.6Z" fill="#151515"/></svg>
<div class="t b" style="left:861.6px;top:313.85px;font-size:15px;transform:scale(.5,0.440);transform-origin:0 0;;color:#2a2a2a;font-weight:bold">重置</div>
<div class="hl" style="left:523px;top:327px;width:359px;height:1px;"></div>
<div class="btn" style="left:524px;top:330.4px;width:35.9px;height:15.6px;border-color:#e2e2e2"></div>
<svg class="a" style="left:526.6px;top:334.0px" width="9.4" height="9.4" viewBox="0 0 9.4 9.4"><path d="M4.7 0V9.4M0 4.7H9.4" stroke="#111" stroke-width="2.4"/></svg>
<div class="t" style="left:538.5px;top:334.5px;font-size:15px;transform:scale(.5,0.500);transform-origin:0 0;;color:#666">录入</div>
<div class="btn" style="left:563.6px;top:330.4px;width:36px;height:15.6px;border-color:#e2e2e2"></div>
<svg class="a" style="left:564.8000000000001px;top:333.0px" width="11" height="11" viewBox="0 0 11 11"><g transform="translate(1.0,10.0) rotate(-45)"><path d="M0 0L3 -1.75H11.3A1.1 1.1 0 0 1 12.4 -0.65V0.65A1.1 1.1 0 0 1 11.3 1.75H3Z" stroke="#333" stroke-width="1.25" fill="none" stroke-linejoin="round"/><path d="M0 0L1.6 -0.95V0.95Z" fill="#333"/></g></svg>
<div class="t" style="left:578.1px;top:334.5px;font-size:15px;transform:scale(.5,0.500);transform-origin:0 0;;color:#666">编辑</div>
<div class="a" style="left:520.3px;top:350.6px;width:351.5px;height:18.1px;background:#f7f7f7"></div>
<div class="a" style="left:536px;top:368.70000000000005px;width:335.79999999999995px;height:17.9px;background:#fff"></div>
<div class="a" style="left:520.3px;top:368.70000000000005px;width:15.700000000000045px;height:17.9px;background:#fff"></div>
<div class="a" style="left:536px;top:386.6px;width:335.79999999999995px;height:17.9px;background:#fafafa"></div>
<div class="a" style="left:520.3px;top:386.6px;width:15.700000000000045px;height:17.9px;background:#fff"></div>
<div class="hl" style="left:520.3px;top:350.6px;width:351.5px;height:1px;"></div>
<div class="hl" style="left:520.3px;top:368.70000000000005px;width:351.5px;height:1px;"></div>
<div class="hl" style="left:520.3px;top:386.6px;width:351.5px;height:1px;"></div>
<div class="hl" style="left:520.3px;top:404.5px;width:351.5px;height:1px;"></div>
<div class="vl" style="left:520.3px;top:350.6px;width:1px;height:53.9px;"></div>
<div class="vl" style="left:536px;top:350.6px;width:1px;height:53.9px;"></div>
<div class="vl" style="left:584.5px;top:350.6px;width:1px;height:53.9px;"></div>
<div class="vl" style="left:694px;top:350.6px;width:1px;height:53.9px;"></div>
<div class="vl" style="left:821.5px;top:350.6px;width:1px;height:53.9px;"></div>
<div class="vl" style="left:871.8px;top:350.6px;width:1px;height:53.9px;"></div>
<div class="t" style="left:541px;top:355.45000000000005px;font-size:15px;transform:scale(.5,0.500);transform-origin:0 0;;color:#555">序号</div>
<div class="t" style="left:589.5px;top:355.45000000000005px;font-size:15px;transform:scale(.5,0.500);transform-origin:0 0;;color:#555">任务名称</div>
<div class="t" style="left:699px;top:355.45000000000005px;font-size:15px;transform:scale(.5,0.500);transform-origin:0 0;;color:#555">责任部门(岗位)</div>
<div class="t" style="left:826.5px;top:355.45000000000005px;font-size:15px;transform:scale(.5,0.500);transform-origin:0 0;;color:#555">操作</div>
<div class="t" style="left:526.15px;top:373.75000000000006px;font-size:15px;transform:scale(.5,0.550);transform-origin:0 0;;color:#555">1</div>
<div class="t" style="left:541.6px;top:373.55px;font-size:15px;transform:scale(.5,0.550);transform-origin:0 0;;color:#555">1</div>
<div class="t" style="left:590.1px;top:372.75000000000006px;font-size:15px;transform:scale(.5,0.500);transform-origin:0 0;;color:#555">D1 - 组建团队</div>
<div class="t" style="left:699.6px;top:373.55px;font-size:15px;transform:scale(.5,0.550);transform-origin:0 0;;color:#555">SGS</div>
<div class="t" style="left:526.15px;top:391.65000000000003px;font-size:15px;transform:scale(.5,0.550);transform-origin:0 0;;color:#555">2</div>
<div class="t" style="left:541.6px;top:391.45px;font-size:15px;transform:scale(.5,0.550);transform-origin:0 0;;color:#555">2</div>
<div class="t" style="left:590.1px;top:390.65000000000003px;font-size:15px;transform:scale(.5,0.500);transform-origin:0 0;;color:#555">TDHY - 团队会议</div>
<div class="t" style="left:699.6px;top:391.45px;font-size:15px;transform:scale(.5,0.550);transform-origin:0 0;;color:#555"></div>
<div class="hl" style="left:871.8px;top:350.6px;width:12px;height:1px;"></div>
<div class="hl" style="left:871.8px;top:368.7px;width:12px;height:1px;"></div>
<div class="del" style="left:826.8px;top:371.5px;width:36.3px;height:12.4px;"></div>
<svg class="a" style="left:834.8px;top:374.4px" width="6" height="6.5" viewBox="0 0 6 6.5"><path d="M0.3 1.4H5.7M2 1.4V0.5H4V1.4M1 1.6V6H5V1.6" stroke="#fff" stroke-width="0.9" fill="none"/><path d="M2.3 2.6V5M3.7 2.6V5" stroke="#fff" stroke-width="0.6"/></svg>
<div class="t" style="left:844.6999999999999px;top:373.79999999999995px;font-size:15px;transform:scale(.5,0.425);transform-origin:0 0;;color:#fff">删除</div>
<div class="del" style="left:826.8px;top:389.4px;width:36.3px;height:12.4px;"></div>
<svg class="a" style="left:834.8px;top:392.29999999999995px" width="6" height="6.5" viewBox="0 0 6 6.5"><path d="M0.3 1.4H5.7M2 1.4V0.5H4V1.4M1 1.6V6H5V1.6" stroke="#fff" stroke-width="0.9" fill="none"/><path d="M2.3 2.6V5M3.7 2.6V5" stroke="#fff" stroke-width="0.6"/></svg>
<div class="t" style="left:844.6999999999999px;top:391.69999999999993px;font-size:15px;transform:scale(.5,0.425);transform-origin:0 0;;color:#fff">删除</div>
</body></html>
